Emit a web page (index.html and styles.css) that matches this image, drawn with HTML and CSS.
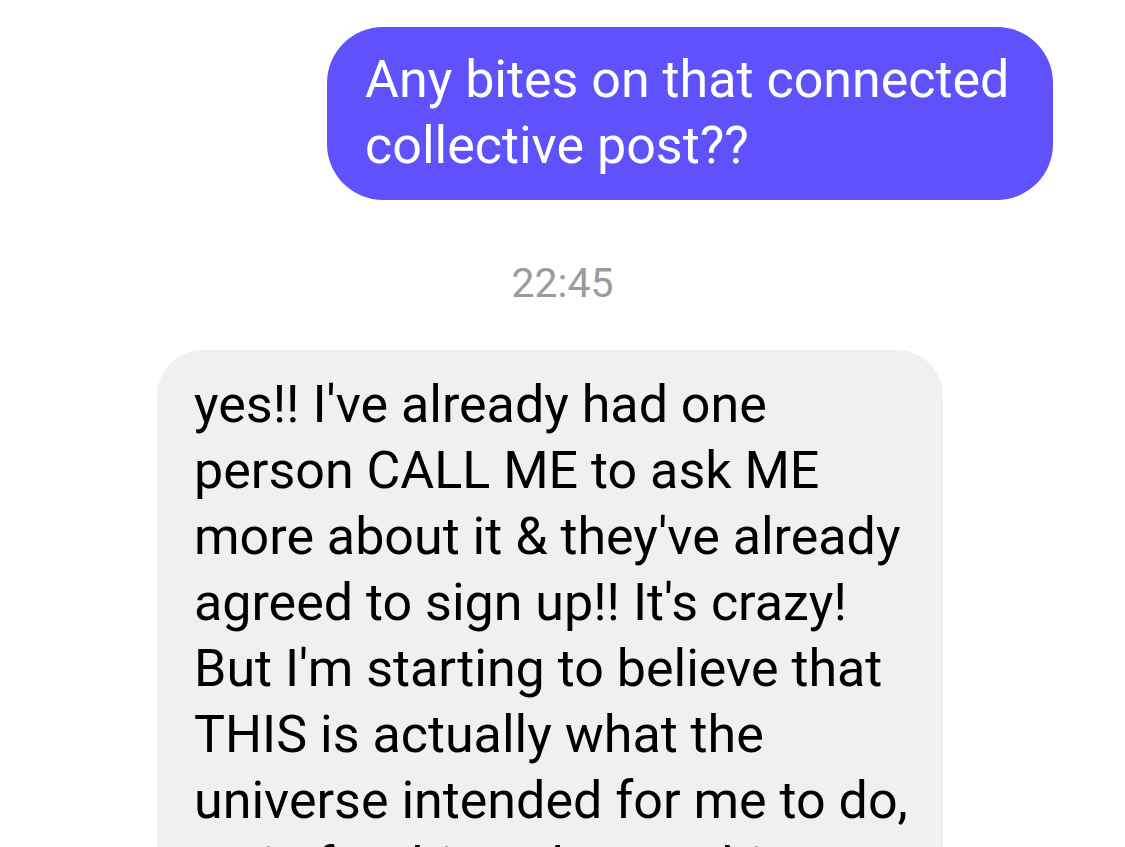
FILE: index.html
```html
<!DOCTYPE html>
<html lang="en">
<head>
  <meta charset="UTF-8">
  <title>Messages</title>
  <link rel="stylesheet" href="styles.css">
</head>
<body>
  <div class="thread">
    <!-- outgoing -->
    <div class="row row-out">
      <div class="bubble bubble-out">Any bites on that connected<br>collective post??</div>
    </div>

    <div class="stamp">22:45</div>

    <!-- incoming -->
    <div class="row row-in">
      <div class="bubble bubble-in">yes!! I've already had one<br>person CALL ME to ask ME<br>more about it &amp; they've already<br>agreed to sign up!! It's crazy!<br>But I'm starting to believe that<br>THIS is actually what the<br>universe intended for me to do,<br>as in for this to be my thing</div>
    </div>
  </div>
</body>
</html>
```

FILE: styles.css
```css
html, body {
  margin: 0;
  padding: 0;
  background: #ffffff;
  overflow: hidden;
  height: 847px;
}

body {
  font-family: Roboto, Inter, "Noto Sans", Arial, sans-serif;
  -webkit-font-smoothing: antialiased;
}

.thread {
  display: flex;
  flex-direction: column;
  padding-top: 27px;
}

.row {
  display: flex;
}

.row-out {
  justify-content: flex-end;
  padding-right: 72px;
}

.row-in {
  justify-content: flex-start;
  padding-left: 157px;
  margin-top: 44px;
}

.bubble {
  font-size: 52px;
  line-height: 66px;
  white-space: nowrap;
  box-sizing: border-box;
}

.bubble-out {
  width: 726px;
  padding: 20px 38px 21px;
  background: #5f51fb;
  color: #ffffff;
  border-radius: 56px;
}

.bubble-in {
  width: 786px;
  padding: 22px 37px;
  background: #f0f0f0;
  color: #000000;
  border-radius: 46px;
}

.stamp {
  margin-top: 60px;
  text-align: center;
  font-size: 41px;
  line-height: 46px;
  color: #9b9b9b;
}
```
